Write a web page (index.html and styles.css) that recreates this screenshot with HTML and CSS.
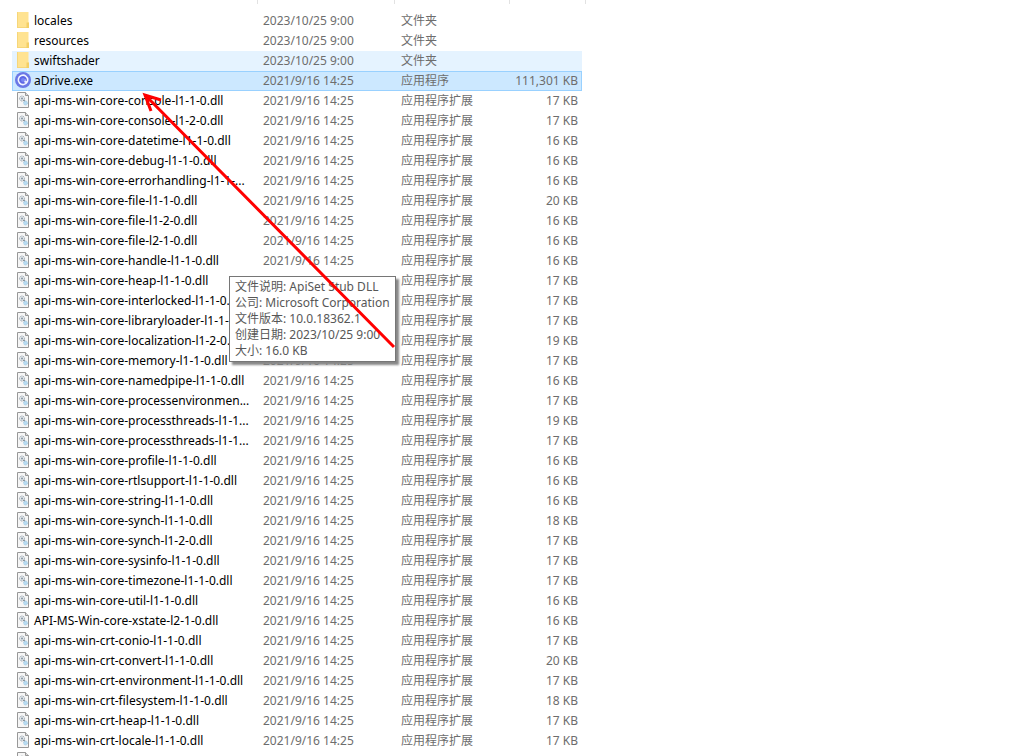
FILE: index.html
```html
<!DOCTYPE html>
<html lang="zh-CN">
<head>
<meta charset="utf-8">
<title>aDrive</title>
<link rel="stylesheet" href="styles.css">
</head>
<body>
<svg class="symbols" aria-hidden="true">
<symbol id="folder" viewBox="0 0 16 16"><path d="M2 0h11.500v10.500H14V16H2z" fill="#ffe391"/><path d="M2 0h1v16H2zM2 15h10v1H2z" fill="#f6d67a"/><path d="M11.500 10.500H14V16h-2.500z" fill="#f3cf66"/></symbol>
<symbol id="dll" viewBox="0 0 16 16"><path d="M2.500.5h8l3 3v12h-11z" fill="#f6f6f6" stroke="#989898"/><path d="M10.500.5v3h3" fill="#ddd" stroke="#989898"/><circle cx="7" cy="6.500" r="2.500" fill="#e4e9ed" stroke="#9aa5ad" stroke-dasharray="1.200 .6"/><circle cx="7" cy="6.500" r="1" fill="#8494a0"/><path d="M8.500 8l2 2" stroke="#78838b" stroke-width="1.500"/><circle cx="10.500" cy="11" r="2" fill="#b9dcf2" stroke="#a5cde6" stroke-dasharray="1.200 .6"/></symbol>
<symbol id="adrive" viewBox="0 0 16 16"><circle cx="8" cy="8" r="8" fill="#6a77e6"/><circle cx="8" cy="8" r="4.800" fill="#5d66e4"/><path d="M12.300 9.800A4.700 4.700 0 1 1 12.700 8Q12.700 10 11 10T9.800 8" fill="none" stroke="#f3f5ff" stroke-width="1.600" stroke-linecap="round"/><circle cx="8" cy="8" r="2" fill="#7886f3"/></symbol>
</svg>
<main class="explorer">
<div class="header"><span class="h-name"></span><span class="h-date"></span><span class="h-type"></span><span class="h-size"></span></div>
<table class="files">
<colgroup><col class="c-name"><col class="c-date"><col class="c-type"><col class="c-size"></colgroup>
<tbody>
<tr><td><svg><use href="#folder"/></svg>locales</td><td>2023/10/25 9:00</td><td>文件夹</td><td></td></tr>
<tr><td><svg><use href="#folder"/></svg>resources</td><td>2023/10/25 9:00</td><td>文件夹</td><td></td></tr>
<tr class="hover"><td><svg><use href="#folder"/></svg>swiftshader</td><td>2023/10/25 9:00</td><td>文件夹</td><td></td></tr>
<tr class="selected"><td><svg><use href="#adrive"/></svg>aDrive.exe</td><td>2021/9/16 14:25</td><td>应用程序</td><td>111,301 KB</td></tr>
<tr><td><svg><use href="#dll"/></svg>api-ms-win-core-console-l1-1-0.dll</td><td>2021/9/16 14:25</td><td>应用程序扩展</td><td>17 KB</td></tr>
<tr><td><svg><use href="#dll"/></svg>api-ms-win-core-console-l1-2-0.dll</td><td>2021/9/16 14:25</td><td>应用程序扩展</td><td>17 KB</td></tr>
<tr><td><svg><use href="#dll"/></svg>api-ms-win-core-datetime-l1-1-0.dll</td><td>2021/9/16 14:25</td><td>应用程序扩展</td><td>16 KB</td></tr>
<tr><td><svg><use href="#dll"/></svg>api-ms-win-core-debug-l1-1-0.dll</td><td>2021/9/16 14:25</td><td>应用程序扩展</td><td>16 KB</td></tr>
<tr><td><svg><use href="#dll"/></svg>api-ms-win-core-errorhandling-l1-1-...</td><td>2021/9/16 14:25</td><td>应用程序扩展</td><td>16 KB</td></tr>
<tr><td><svg><use href="#dll"/></svg>api-ms-win-core-file-l1-1-0.dll</td><td>2021/9/16 14:25</td><td>应用程序扩展</td><td>20 KB</td></tr>
<tr><td><svg><use href="#dll"/></svg>api-ms-win-core-file-l1-2-0.dll</td><td>2021/9/16 14:25</td><td>应用程序扩展</td><td>16 KB</td></tr>
<tr><td><svg><use href="#dll"/></svg>api-ms-win-core-file-l2-1-0.dll</td><td>2021/9/16 14:25</td><td>应用程序扩展</td><td>16 KB</td></tr>
<tr><td><svg><use href="#dll"/></svg>api-ms-win-core-handle-l1-1-0.dll</td><td>2021/9/16 14:25</td><td>应用程序扩展</td><td>16 KB</td></tr>
<tr><td><svg><use href="#dll"/></svg>api-ms-win-core-heap-l1-1-0.dll</td><td>2021/9/16 14:25</td><td>应用程序扩展</td><td>17 KB</td></tr>
<tr><td><svg><use href="#dll"/></svg>api-ms-win-core-interlocked-l1-1-0.dll</td><td>2021/9/16 14:25</td><td>应用程序扩展</td><td>17 KB</td></tr>
<tr><td><svg><use href="#dll"/></svg>api-ms-win-core-libraryloader-l1-1-...</td><td>2021/9/16 14:25</td><td>应用程序扩展</td><td>17 KB</td></tr>
<tr><td><svg><use href="#dll"/></svg>api-ms-win-core-localization-l1-2-0.dll</td><td>2021/9/16 14:25</td><td>应用程序扩展</td><td>19 KB</td></tr>
<tr><td><svg><use href="#dll"/></svg>api-ms-win-core-memory-l1-1-0.dll</td><td>2021/9/16 14:25</td><td>应用程序扩展</td><td>17 KB</td></tr>
<tr><td><svg><use href="#dll"/></svg>api-ms-win-core-namedpipe-l1-1-0.dll</td><td>2021/9/16 14:25</td><td>应用程序扩展</td><td>16 KB</td></tr>
<tr><td><svg><use href="#dll"/></svg>api-ms-win-core-processenvironmen...</td><td>2021/9/16 14:25</td><td>应用程序扩展</td><td>17 KB</td></tr>
<tr><td><svg><use href="#dll"/></svg>api-ms-win-core-processthreads-l1-1...</td><td>2021/9/16 14:25</td><td>应用程序扩展</td><td>19 KB</td></tr>
<tr><td><svg><use href="#dll"/></svg>api-ms-win-core-processthreads-l1-1...</td><td>2021/9/16 14:25</td><td>应用程序扩展</td><td>17 KB</td></tr>
<tr><td><svg><use href="#dll"/></svg>api-ms-win-core-profile-l1-1-0.dll</td><td>2021/9/16 14:25</td><td>应用程序扩展</td><td>16 KB</td></tr>
<tr><td><svg><use href="#dll"/></svg>api-ms-win-core-rtlsupport-l1-1-0.dll</td><td>2021/9/16 14:25</td><td>应用程序扩展</td><td>16 KB</td></tr>
<tr><td><svg><use href="#dll"/></svg>api-ms-win-core-string-l1-1-0.dll</td><td>2021/9/16 14:25</td><td>应用程序扩展</td><td>16 KB</td></tr>
<tr><td><svg><use href="#dll"/></svg>api-ms-win-core-synch-l1-1-0.dll</td><td>2021/9/16 14:25</td><td>应用程序扩展</td><td>18 KB</td></tr>
<tr><td><svg><use href="#dll"/></svg>api-ms-win-core-synch-l1-2-0.dll</td><td>2021/9/16 14:25</td><td>应用程序扩展</td><td>17 KB</td></tr>
<tr><td><svg><use href="#dll"/></svg>api-ms-win-core-sysinfo-l1-1-0.dll</td><td>2021/9/16 14:25</td><td>应用程序扩展</td><td>17 KB</td></tr>
<tr><td><svg><use href="#dll"/></svg>api-ms-win-core-timezone-l1-1-0.dll</td><td>2021/9/16 14:25</td><td>应用程序扩展</td><td>17 KB</td></tr>
<tr><td><svg><use href="#dll"/></svg>api-ms-win-core-util-l1-1-0.dll</td><td>2021/9/16 14:25</td><td>应用程序扩展</td><td>16 KB</td></tr>
<tr><td><svg><use href="#dll"/></svg>API-MS-Win-core-xstate-l2-1-0.dll</td><td>2021/9/16 14:25</td><td>应用程序扩展</td><td>16 KB</td></tr>
<tr><td><svg><use href="#dll"/></svg>api-ms-win-crt-conio-l1-1-0.dll</td><td>2021/9/16 14:25</td><td>应用程序扩展</td><td>17 KB</td></tr>
<tr><td><svg><use href="#dll"/></svg>api-ms-win-crt-convert-l1-1-0.dll</td><td>2021/9/16 14:25</td><td>应用程序扩展</td><td>20 KB</td></tr>
<tr><td><svg><use href="#dll"/></svg>api-ms-win-crt-environment-l1-1-0.dll</td><td>2021/9/16 14:25</td><td>应用程序扩展</td><td>17 KB</td></tr>
<tr><td><svg><use href="#dll"/></svg>api-ms-win-crt-filesystem-l1-1-0.dll</td><td>2021/9/16 14:25</td><td>应用程序扩展</td><td>18 KB</td></tr>
<tr><td><svg><use href="#dll"/></svg>api-ms-win-crt-heap-l1-1-0.dll</td><td>2021/9/16 14:25</td><td>应用程序扩展</td><td>17 KB</td></tr>
<tr><td><svg><use href="#dll"/></svg>api-ms-win-crt-locale-l1-1-0.dll</td><td>2021/9/16 14:25</td><td>应用程序扩展</td><td>17 KB</td></tr>
<tr><td><svg><use href="#dll"/></svg></td><td></td><td></td><td></td></tr>
</tbody>
</table>
<div class="tooltip" role="tooltip"><div>文件说明: ApiSet Stub DLL</div><div>公司: Microsoft Corporation</div><div>文件版本: 10.0.18362.1</div><div>创建日期: 2023/10/25 9:00</div><div>大小: 16.0 KB</div></div>
<svg class="arrow" viewBox="0 0 260 262" aria-hidden="true"><path d="M255 257L7 6M22 10L6 5L12 21" fill="none" stroke="#f00" stroke-width="3"/></svg>
</main>
</body>
</html>
```
FILE: styles.css
```css
body {
  margin: 0;
  background: #fff;
  color: #000;
  font: 12px/20px "Noto Sans", "Noto Sans CJK SC", sans-serif;
}
.symbols { display: none; }
.explorer {
  position: relative;
  height: 100vh;
  overflow: hidden;
}
.header {
  display: flex;
  height: 4px;
  margin-bottom: 7px;
}
.header span {
  box-sizing: border-box;
  border-right: 1px solid #e2e2e2;
}
.h-name { width: 258px; }
.h-date { width: 137px; }
.h-type { width: 115px; }
.h-size { width: 76px; }
.files {
  table-layout: fixed;
  width: 570px;
  margin-left: 12px;
  border-collapse: separate;
  border-spacing: 0;
}
.c-name { width: 245px; }
.c-date { width: 138px; }
.c-type { width: 108px; }
.files td {
  height: 20px;
  padding: 0 0 0 6px;
  color: #6d6d6d;
  white-space: nowrap;
}
.files td:first-child {
  padding-left: 3px;
  color: #000;
}
.files td:last-child {
  padding: 0 4px 0 0;
  text-align: right;
}
.files svg {
  width: 16px;
  height: 16px;
  margin: 1px 3px 0 0;
  vertical-align: top;
}
.hover { background: #e5f3ff; }
.selected {
  background: #cce8ff;
  outline: 1px solid #99d1ff;
  outline-offset: -1px;
}
.tooltip {
  position: absolute;
  top: 276px;
  left: 229px;
  padding: 2px 5px;
  border: 1px solid #767676;
  background: #fff;
  box-shadow: 3px 3px 2px #888;
  color: #575757;
  line-height: 16px;
  white-space: nowrap;
}
.arrow {
  position: absolute;
  top: 90px;
  left: 139px;
  width: 260px;
  height: 262px;
}
```
